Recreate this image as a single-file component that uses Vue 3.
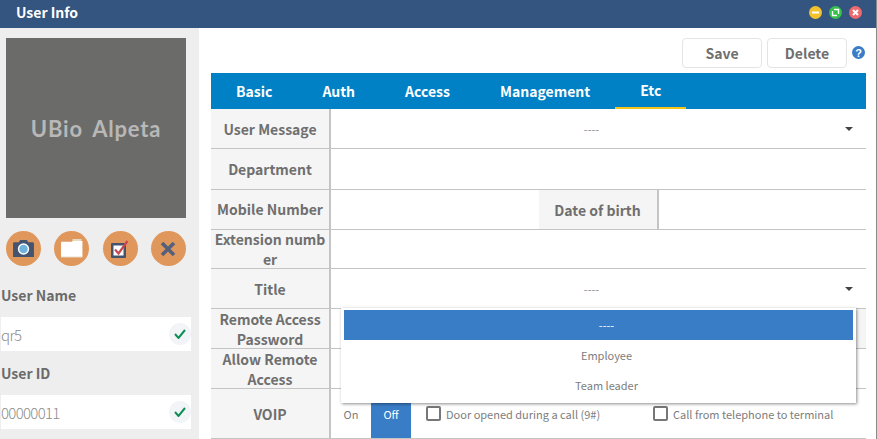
<script setup>
const tabs = ['Basic', 'Auth', 'Access', 'Management', 'Etc']
const titleOptions = ['----', 'Employee', 'Team leader']
</script>

<template>
  <div class="window">
    <header class="titlebar">
      <span class="title">User Info</span>
      <div class="win-btns">
        <svg width="13" height="13" viewBox="0 0 13 13"><circle cx="6.5" cy="6.5" r="6.5" fill="#f4c22b"/><rect x="3" y="5.5" width="7" height="2" fill="#fff"/></svg>
        <svg width="13" height="13" viewBox="0 0 13 13"><circle cx="6.5" cy="6.5" r="6.5" fill="#35c14a"/><path d="M5 3.5h4.5V8M3.5 5v4.5H8" fill="none" stroke="#fff" stroke-width="1.4"/></svg>
        <svg width="13" height="13" viewBox="0 0 13 13"><circle cx="6.5" cy="6.5" r="6.5" fill="#ee6a6f"/><path d="M4 4l5 5M9 4l-5 5" stroke="#fff" stroke-width="2"/></svg>
      </div>
    </header>

    <div class="body">
      <aside class="side">
        <div class="photo">UBio Alpeta</div>
        <div class="actions">
          <button class="round">
            <svg width="23" height="19" viewBox="0 0 24 20"><path d="M1 5a1.500 1.500 0 0 1 1.500-1.500H7L8.500 1h7L17 3.500h4.500A1.500 1.500 0 0 1 23 5v14H1z" fill="#44546f"/><circle cx="12" cy="10.500" r="6" fill="#fff"/><circle cx="12" cy="10.500" r="4.500" fill="#6fb3dc"/></svg>
          </button>
          <button class="round">
            <svg width="23" height="19" viewBox="0 0 24 20"><path d="M13 0h9.500v4H13z" fill="#e8dcc0"/><path d="M1 3h11l2-1h9.500v17H1z" fill="#fff"/><path d="M1 18.500h22.500V19.500H1z" fill="#e4d8bc"/></svg>
          </button>
          <button class="round">
            <svg width="18" height="18" viewBox="0 0 18 18"><rect x="0" y="3" width="15" height="15" rx="1" fill="#44546f"/><rect x="2.500" y="5.500" width="10" height="10" fill="#fff"/><path d="M4 9.500l3.500 4L16.500 1" fill="none" stroke="#c8474f" stroke-width="2.200"/></svg>
          </button>
          <button class="round">
            <svg width="16" height="16" viewBox="0 0 16 16"><path d="M2 2l12 12M14 2L2 14" stroke="#55617a" stroke-width="3.600"/></svg>
          </button>
        </div>

        <label class="side-label">User Name</label>
        <div class="side-input">
          <span>qr5</span>
          <i class="check"><svg width="12" height="10" viewBox="0 0 12 10"><path d="M1 5l3.500 4L11 1" fill="none" stroke="#0f8f56" stroke-width="2"/></svg></i>
        </div>
        <label class="side-label second">User ID</label>
        <div class="side-input">
          <span>00000011</span>
          <i class="check"><svg width="12" height="10" viewBox="0 0 12 10"><path d="M1 5l3.500 4L11 1" fill="none" stroke="#0f8f56" stroke-width="2"/></svg></i>
        </div>
      </aside>

      <main class="content">
        <div class="toolbar">
          <button class="btn">Save</button>
          <button class="btn">Delete</button>
          <svg class="help" width="13" height="13" viewBox="0 0 13 13"><circle cx="6.500" cy="6.500" r="6.500" fill="#3a7cc7"/><text x="6.500" y="10.500" text-anchor="middle" font-size="11" font-weight="700" font-family="Liberation Sans, sans-serif" fill="#fff">?</text></svg>
        </div>

        <nav class="tabs">
          <span v-for="t in tabs" :key="t" class="tab" :class="{ active: t === 'Etc' }">{{ t }}</span>
        </nav>

        <div class="form">
          <div class="row h40">
            <div class="label">User Message</div>
            <div class="cell select"><span class="sel-text">----</span><i class="caret"></i></div>
          </div>
          <div class="row h41">
            <div class="label">Department</div>
            <div class="cell"></div>
          </div>
          <div class="row h40">
            <div class="label up">Mobile Number</div>
            <div class="cell split">
              <div class="half"></div>
              <div class="label inner">Date of birth</div>
              <div class="half"></div>
            </div>
          </div>
          <div class="row h39">
            <div class="label">Extension numb er</div>
            <div class="cell"></div>
          </div>
          <div class="row h40">
            <div class="label">Title</div>
            <div class="cell select"><span class="sel-text">----</span><i class="caret"></i></div>
          </div>
          <div class="row h40">
            <div class="label">Remote Access Password</div>
            <div class="cell"><div class="right-stub"></div></div>
          </div>
          <div class="row h40">
            <div class="label">Allow Remote Access</div>
            <div class="cell"></div>
          </div>
          <div class="row h50">
            <div class="label">VOIP</div>
            <div class="cell voip">
              <span class="on">On</span>
              <span class="off">Off</span>
              <label class="chk first"><i class="box"></i>Door opened during a call (9#)</label>
              <label class="chk"><i class="box"></i>Call from telephone to terminal</label>
            </div>
          </div>

          <ul class="dropdown">
            <li v-for="(o, i) in titleOptions" :key="o" :class="{ sel: i === 0 }">{{ o }}</li>
          </ul>
        </div>
      </main>
    </div>
  </div>
</template>

<style scoped>
.window {
  width: 877px;
  height: 439px;
  overflow: hidden;
  background: #fff;
  font-family: "Noto Sans CJK KR", "Noto Sans", sans-serif;
  color: #6f6f6f;
  box-sizing: border-box;
  border-right: 1px solid #8a8a8a;
}

.titlebar {
  height: 28px;
  box-sizing: border-box;
  background: #33557f;
  display: flex;
  align-items: center;
  justify-content: space-between;
  padding: 0 14px 4px 16px;
}

.title {
  color: #fff;
  font-size: 14px;
  font-weight: 700;
}

.win-btns {
  display: flex;
  gap: 7px;
}

.win-btns svg {
  display: block;
}

.body {
  display: flex;
  height: 411px;
}

.side {
  width: 199px;
  flex: none;
  background: #eeeeee;
  padding: 10px 7px 0 1px;
  box-sizing: border-box;
}

.photo {
  width: 180px;
  height: 180px;
  margin-left: 5px;
  background: #6b6b69;
  color: #b8b8b8;
  display: flex;
  align-items: center;
  justify-content: center;
  font-family: "Lato", sans-serif;
  font-size: 22px;
  font-weight: 700;
  letter-spacing: 0.8px;
  word-spacing: 4px;
}

.actions {
  display: flex;
  justify-content: space-between;
  width: 180px;
  margin: 13px 0 0 5px;
}

.round {
  width: 35px;
  height: 35px;
  padding: 0;
  border: none;
  border-radius: 50%;
  background: #e0975c;
  display: flex;
  align-items: center;
  justify-content: center;
}

.side-label {
  display: block;
  font-size: 14px;
  font-weight: 700;
  line-height: 20px;
  margin-top: 19px;
  margin-bottom: 12px;
  color: #6b6b6b;
}

.side-label.second {
  margin-top: 12px;
}

.side-input {
  height: 34px;
  width: 190px;
  background: #fff;
  display: flex;
  align-items: center;
  justify-content: space-between;
  font-size: 15px;
  font-weight: 300;
  letter-spacing: -0.7px;
  color: #8c8c8c;
}

.check {
  width: 22px;
  height: 22px;
  border-radius: 50%;
  background: #f2f4f8;
  display: flex;
  align-items: center;
  justify-content: center;
}

.content {
  flex: 1;
  padding: 10px 10px 0 12px;
  min-width: 0;
}

.toolbar {
  height: 35px;
  display: flex;
  align-items: flex-start;
  justify-content: flex-end;
  gap: 5px;
  padding-right: 1px;
}

.btn {
  width: 80px;
  height: 30px;
  background: #fff;
  border: 1px solid #e4e4e4;
  border-radius: 4px;
  font-family: inherit;
  font-size: 14px;
  font-weight: 700;
  color: #6f6f6f;
  padding: 0;
}

.help {
  margin-top: 8px;
}

.tabs {
  height: 36px;
  background: #0081c6;
  display: flex;
}

.tab {
  padding: 0 25px;
  color: #fff;
  font-size: 14px;
  font-weight: 700;
  line-height: 36px;
}

.tab.active {
  border-bottom: 2px solid #f5c518;
  height: 34px;
  line-height: 34px;
}

.form {
  position: relative;
}

.row {
  display: flex;
  box-sizing: border-box;
  border-bottom: 1px solid #c4c4c4;
}

.h39 { height: 39px; }
.h40 { height: 40px; }
.h41 { height: 41px; }
.h50 { height: 50px; }

.label {
  width: 118px;
  flex: none;
  background: #f5f5f5;
  display: flex;
  align-items: center;
  justify-content: center;
  text-align: center;
  font-size: 14px;
  font-weight: 700;
  line-height: 20px;
  color: #6f6f6f;
  overflow-wrap: anywhere;
  box-sizing: border-box;
}

.label.up {
  padding-bottom: 2px;
}

.cell {
  flex: 1;
  border-left: 2px solid #c4c4c4;
  min-width: 0;
  position: relative;
}

.select {
  display: flex;
  align-items: center;
  justify-content: center;
  padding-right: 14px;
}

.sel-text {
  font-size: 11px;
  color: #8c8c8c;
}

.caret {
  position: absolute;
  right: 13px;
  top: 50%;
  margin-top: -2px;
  border-left: 4px solid transparent;
  border-right: 4px solid transparent;
  border-top: 4px solid #444;
}

.split {
  display: flex;
}

.half {
  flex: 1;
}

.label.inner {
  border-right: 2px solid #c4c4c4;
  width: 120px;
}

.right-stub {
  position: absolute;
  right: 0;
  top: 0;
  bottom: 0;
  width: 118px;
  background: #f5f5f5;
}

.voip {
  display: flex;
  align-items: center;
  font-size: 11px;
  color: #7d7d7d;
}

.on {
  flex: none;
  width: 40px;
  text-align: center;
}

.off {
  flex: none;
  width: 40px;
  height: 100%;
  background: #3a7dc7;
  color: #fff;
  display: flex;
  align-items: center;
  justify-content: center;
}

.chk {
  flex: none;
  display: flex;
  align-items: center;
  gap: 5px;
}

.chk.first {
  width: 227px;
  margin-left: 15px;
}

.box {
  width: 11px;
  height: 11px;
  border: 2px solid #777;
  border-radius: 2px;
  background: #fff;
  flex: none;
}

.dropdown {
  position: absolute;
  left: 130px;
  top: 199px;
  width: 515px;
  height: 95px;
  box-sizing: border-box;
  margin: 0;
  padding: 2px 3px;
  list-style: none;
  background: #fff;
  box-shadow: 1px 1px 3px rgba(0, 0, 0, 0.45);
}

.dropdown li {
  height: 30px;
  line-height: 30px;
  text-align: center;
  padding-left: 16px;
  font-size: 11px;
  color: #7d7d7d;
}

.dropdown li.sel {
  background: #3a7dc7;
  color: #fff;
}
</style>

<style>
html, body {
  margin: 0;
  background: #fff;
}
</style>
